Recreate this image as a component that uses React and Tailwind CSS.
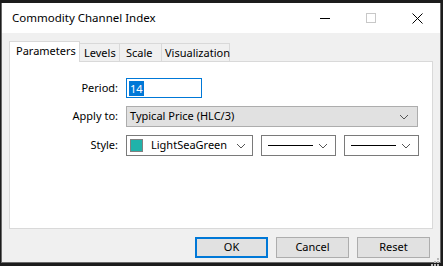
import React from 'react';

function Chevron({ className = '' }) {
    return (
        <svg width="10" height="6" viewBox="0 0 10 6" className={className}>
            <path d="M1 1 L5 5 L9 1" fill="none" stroke="#555" strokeWidth="1" />
        </svg>
    );
}

function LineSelect() {
    return (
        <div className="w-[75px] h-[21px] bg-white border border-[#7a7a7a] flex items-center pl-[6px] pr-[7px]">
            <div className="w-[45px] h-px bg-black" />
            <div className="flex-1" />
            <Chevron />
        </div>
    );
}

export default function App() {
    return (
        <div
            className="w-[443px] h-[266px] bg-[#1c1c1c] pt-[3px] pl-[1px] pr-[2px] pb-[3px] flex text-[11px] text-black"
            style={{ fontFamily: '"Noto Sans", "Segoe UI", sans-serif' }}
        >
            <div className="flex-1 flex flex-col bg-[#f0f0f0] border border-[#6a6a6a] border-t-0">
                {/* title bar */}
                <div className="h-[30px] bg-white flex items-center pl-[10px] shrink-0">
                    <span className="text-[11.5px]">Commodity Channel Index</span>
                    <div className="flex-1" />
                    <div className="w-[46px] h-[30px] flex items-center justify-center">
                        <div className="w-[10px] h-px bg-black" />
                    </div>
                    <div className="w-[46px] h-[30px] flex items-center justify-center">
                        <div className="w-[10px] h-[10px] border border-[#c8c8c8]" />
                    </div>
                    <div className="w-[46px] h-[30px] flex items-center justify-center">
                        <svg width="11" height="11" viewBox="0 0 11 11">
                            <path d="M0.5 0.5 L10.5 10.5 M10.5 0.5 L0.5 10.5" stroke="#000" strokeWidth="1" />
                        </svg>
                    </div>
                </div>

                {/* body */}
                <div className="flex-1 flex flex-col px-[7px] pt-[8px]">
                    <div className="flex items-end h-[21px] relative z-10">
                        <div className="w-[71px] h-[21px] pl-[6px] pb-[2px] bg-white border border-[#d9d9d9] border-b-0 flex items-center shrink-0">Parameters</div>
                        <div className="w-[40px] h-[19px] pl-[4px] border border-[#d9d9d9] border-l-0 border-b-0 flex items-center shrink-0">Levels</div>
                        <div className="w-[42px] h-[19px] pl-[6px] border border-[#d9d9d9] border-l-0 border-b-0 flex items-center shrink-0">Scale</div>
                        <div className="w-[68px] h-[19px] pl-[3px] border border-[#d9d9d9] border-l-0 border-b-0 flex items-center shrink-0 whitespace-nowrap">Visualization</div>
                    </div>
                    <div className="h-[168px] bg-white border border-[#d9d9d9] -mt-px flex flex-col gap-[8px] pt-[16px]">
                        <div className="flex items-center gap-[8px]">
                            <div className="w-[108px] text-right">Period:</div>
                            <div className="w-[76px] h-[20px] border border-[#0078d7] flex items-center pl-[2px]">
                                <span className="bg-[#0078d7] text-white px-[1px] leading-[15px]">14</span>
                            </div>
                        </div>
                        <div className="flex items-center gap-[8px]">
                            <div className="w-[108px] text-right">Apply to:</div>
                            <div className="w-[292px] h-[21px] bg-[#e1e1e1] border border-[#adadad] flex items-center pl-[3px] pr-[8px]">
                                <span>Typical Price (HLC/3)</span>
                                <div className="flex-1" />
                                <Chevron />
                            </div>
                        </div>
                        <div className="flex items-center gap-[8px]">
                            <div className="w-[108px] text-right">Style:</div>
                            <div className="w-[127px] h-[21px] bg-white border border-[#7a7a7a] flex items-center pl-[3px] pr-[6px]">
                                <div className="w-[13px] h-[13px] bg-[#20b2aa] border border-[#808080]" />
                                <span className="ml-[8px]">LightSeaGreen</span>
                                <div className="flex-1" />
                                <Chevron />
                            </div>
                            <LineSelect />
                            <LineSelect />
                        </div>
                    </div>

                    {/* buttons */}
                    <div className="flex justify-end gap-[8px] pr-[3px] pt-[8px]">
                        <div className="w-[73px] h-[21px] bg-[#e1e1e1] border-2 border-[#0078d7] flex items-center justify-center">OK</div>
                        <div className="w-[73px] h-[21px] bg-[#e1e1e1] border border-[#adadad] flex items-center justify-center">Cancel</div>
                        <div className="w-[73px] h-[21px] bg-[#e1e1e1] border border-[#adadad] flex items-center justify-center">Reset</div>
                    </div>
                    <div className="flex-1 flex justify-end items-end -mr-[6px] pb-[1px]">
                        <svg width="8" height="8" viewBox="0 0 8 8">
                            <rect x="6" y="0" width="2" height="2" fill="#b8b8b8" />
                            <rect x="3" y="3" width="2" height="2" fill="#b8b8b8" />
                            <rect x="6" y="3" width="2" height="2" fill="#b8b8b8" />
                            <rect x="0" y="6" width="2" height="2" fill="#b8b8b8" />
                            <rect x="3" y="6" width="2" height="2" fill="#b8b8b8" />
                            <rect x="6" y="6" width="2" height="2" fill="#b8b8b8" />
                        </svg>
                    </div>
                </div>
            </div>
        </div>
    );
}
